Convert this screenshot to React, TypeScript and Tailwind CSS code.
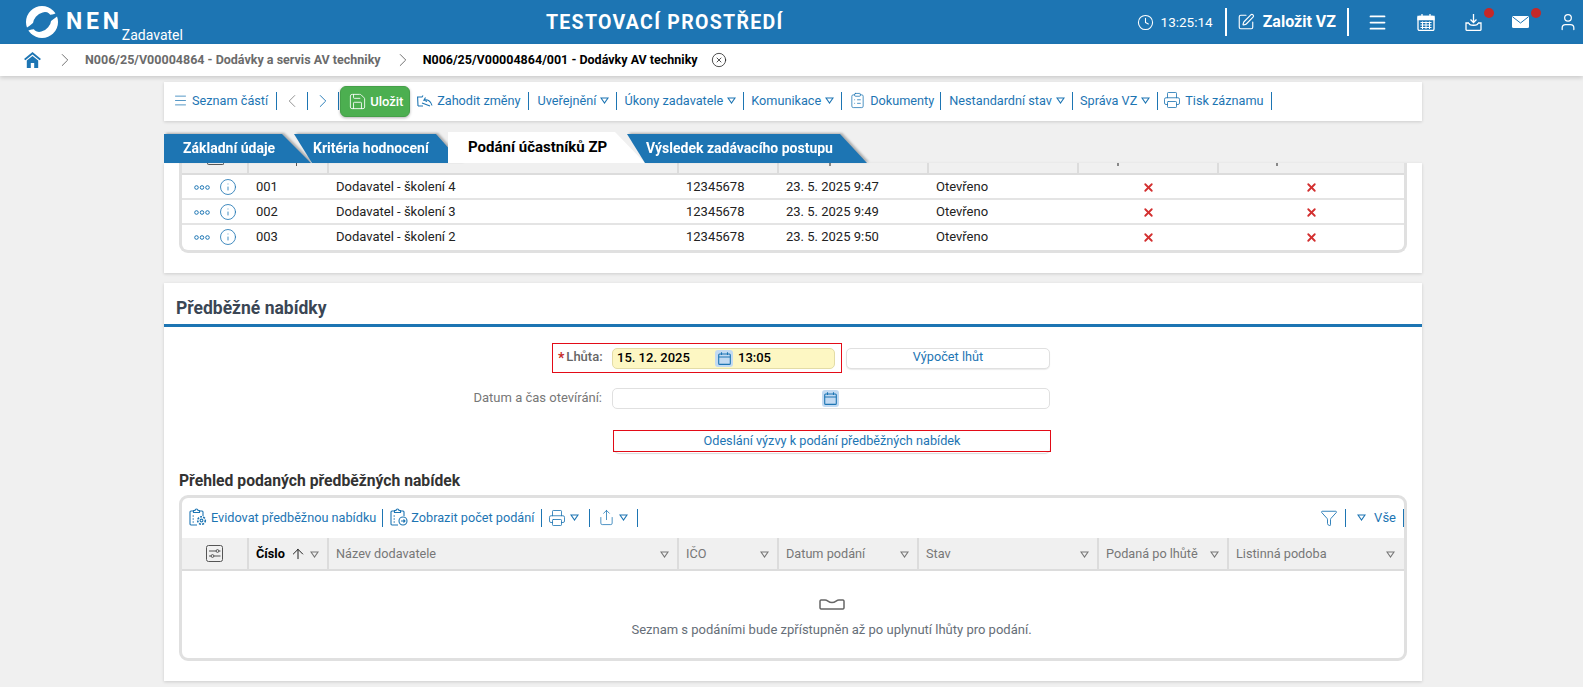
import { ReactNode } from 'react'
import { ArrowUp, ChevronLeft, ChevronRight, CircleX, ClipboardList, Clock, Funnel, Info, Menu, Printer, Save, Share, SquarePen, User, X } from 'lucide-react'

const blue = '#1d75b3'

function Logo() {
  return (
    <svg width="32" height="32" viewBox="0 0 32 32" className="shrink-0">
      <circle cx="16" cy="16" r="16" fill="#fff" />
      <ellipse cx="16" cy="16" rx="8" ry="11" transform="rotate(40 16 16)" fill={blue} />
      <path d="M22.5 8.5 C26 9 29 8 32 6 L33 9 C30 11 27.5 13 25 15 Z" fill={blue} />
      <path d="M9.5 23.5 C6 23 3 24 0 26 L-1 23 C2 21 4.5 19 7 17 Z" fill={blue} />
    </svg>
  )
}

function Caret({ color = blue }: { color?: string }) {
  return (
    <svg width="9" height="7" viewBox="0 0 9 7" className="shrink-0">
      <path d="M1 1 H8 L4.5 6 Z" fill="none" stroke={color} strokeWidth="1.1" />
    </svg>
  )
}

function Sep({ className = '' }: { className?: string }) {
  return <div className={`w-px h-[18px] bg-[#1d75b3] shrink-0 ${className}`} />
}

function HomeIcon() {
  return (
    <svg width="17" height="16" viewBox="0 0 17 16">
      <path d="M8.5 0 L17 7 L15.6 8.2 L8.5 2.4 L1.4 8.2 L0 7 Z" fill={blue} />
      <path d="M2.8 8.6 L8.5 4 L14.2 8.6 V16 H10.2 V11 H6.8 V16 H2.8 Z" fill={blue} />
    </svg>
  )
}

function CalIcon() {
  return (
    <svg width="13" height="13" viewBox="0 0 13 13" fill="none" stroke={blue} strokeWidth="1.1">
      <rect x="0.7" y="2" width="11.6" height="10.4" rx="1" />
      <path d="M0.7 5 H12.3 M3.5 0.3 V3 M9.5 0.3 V3" />
    </svg>
  )
}

function DiscardIcon() {
  return (
    <svg width="16" height="13" viewBox="0 0 16 13" fill="none" stroke={blue} strokeWidth="1.1">
      <path d="M1 12 L0.6 3 H5 L6 1.5 M1 12 H6" />
      <path d="M15 11.5 C14 7 10.5 5 7 6 L8.5 3.5 M7 6 L10 7.5" />
      <path d="M5 9 L13 12" />
    </svg>
  )
}

function ClipGearIcon({ clock }: { clock?: boolean }) {
  return (
    <svg width="18" height="18" viewBox="0 0 18 18" fill="none" stroke={blue} strokeWidth="1.1" className="shrink-0">
      <path d="M8 17 H2 A1 1 0 0 1 1 16 V4 A1 1 0 0 1 2 3 H4.5 M10.5 3 H13 A1 1 0 0 1 14 4 V8" />
      <path d="M4.5 4.5 V2.5 H6 A1.5 1.5 0 0 1 9 2.5 H10.5 V4.5 Z" />
      <path d="M3.5 8 H5 M3.5 11 H5 M3.5 14 H5" />
      {clock ? (
        <>
          <circle cx="13" cy="13" r="4" />
          <path d="M11 13 H15 M13.5 11.5 L15 13 L13.5 14.5" />
        </>
      ) : (
        <>
          <circle cx="12.5" cy="12.5" r="1.4" />
          <circle cx="12.5" cy="12.5" r="3.8" strokeDasharray="2 1.2" strokeWidth="1.6" />
        </>
      )}
    </svg>
  )
}

function ColumnsIcon() {
  return (
    <svg width="17" height="17" viewBox="0 0 17 17" fill="none" stroke="#555" strokeWidth="1">
      <rect x="0.5" y="0.5" width="16" height="16" rx="2" />
      <path d="M3 6 H10 M13 6 H14.5 M3 11 H5 M8 11 H14.5" />
      <circle cx="11.5" cy="6" r="1.4" />
      <circle cx="6.5" cy="11" r="1.4" />
    </svg>
  )
}

function Item({ icon, label, caret }: { icon?: ReactNode; label: string; caret?: boolean }) {
  return (
    <div className="flex items-center shrink-0">
      {icon}
      <span className={`text-[12.7px] text-[#1d75b3] whitespace-nowrap ${icon ? 'ml-[4px]' : ''}`}>{label}</span>
      {caret && <span className="ml-[4px]"><Caret /></span>}
    </div>
  )
}

function Toolbar() {
  return (
    <div className="h-[39px] bg-white shadow-[0_1px_3px_rgba(0,0,0,0.15)] flex items-center pl-[9px] pb-[2px]">
      <Item icon={<Menu size={15} strokeWidth={1.2} color={blue} />} label="Seznam částí" />
      <Sep className="ml-[8px] mr-[4px]" />
      <ChevronLeft size={22} strokeWidth={1} color="#8a8a8a" />
      <Sep className="mx-[4px]" />
      <ChevronRight size={22} strokeWidth={1} color={blue} />
      <Sep className="ml-[4px]" />
      <button className="h-[31px] w-[70px] ml-px mr-[7px] mt-[2px] rounded-md bg-[#4caf50] border border-[#45a049] shadow-[0_1px_3px_rgba(0,0,0,0.3)] flex items-center pl-[7px] text-white text-[13px] font-medium">
        <Save size={19} strokeWidth={1.1} />
        <span className="ml-[3px]">Uložit</span>
      </button>
      <Item icon={<DiscardIcon />} label="Zahodit změny" />
      <Sep className="ml-[7px] mr-[9px]" />
      <Item label="Uveřejnění" caret />
      <Sep className="ml-[7px] mr-[7px]" />
      <Item label="Úkony zadavatele" caret />
      <Sep className="ml-[7px] mr-[7px]" />
      <Item label="Komunikace" caret />
      <Sep className="ml-[7px] mr-[7px]" />
      <span className="-mr-px"><Item icon={<ClipboardList size={17} strokeWidth={1.1} color={blue} />} label="Dokumenty" /></span>
      <Sep className="ml-[7px] mr-[8px]" />
      <Item label="Nestandardní stav" caret />
      <Sep className="ml-[7px] mr-[7px]" />
      <Item label="Správa VZ" caret />
      <Sep className="ml-[7px] mr-[5px]" />
      <Item icon={<Printer size={18} strokeWidth={1.1} color={blue} />} label="Tisk záznamu" />
      <Sep className="ml-[7px]" />
    </div>
  )
}

function Tabs() {
  return (
    <div className="h-[31px] flex items-end font-bold relative">
      <div className="drop-shadow-[2px_-1px_1px_rgba(0,0,0,0.28)]">
        <div className="w-[147px] h-[29px] bg-[#1d75b3] text-white text-[14px] leading-[29px] pl-[19px] [clip-path:polygon(0_0,118px_0,100%_100%,0_100%)]">Základní údaje</div>
      </div>
      <div className="-ml-[17px] drop-shadow-[2px_-1px_1px_rgba(0,0,0,0.28)]">
        <div className="w-[168px] h-[29px] bg-[#1d75b3] text-white text-[14px] leading-[29px] pl-[19px] [clip-path:polygon(0_0,142px_0,100%_100%,18px_100%)]">Kritéria hodnocení</div>
      </div>
      <div className="-ml-[14px] relative w-[197px] h-[31px] bg-white text-black text-[15px] leading-[31px] pl-[20px] [clip-path:polygon(0_0,167px_0,100%_100%,0_100%)]">Podání účastníků ZP</div>
      <div className="-ml-[18px] relative drop-shadow-[2px_-1px_1px_rgba(0,0,0,0.28)]">
        <div className="w-[240px] h-[29px] bg-[#1d75b3] text-white text-[14px] leading-[29px] pl-[19px] [clip-path:polygon(0_0,213px_0,100%_100%,18px_100%)]">Výsledek zadávacího postupu</div>
      </div>
    </div>
  )
}

type Col = { w: string; label: string; sort?: boolean }

const bottomCols: Col[] = [
  { w: 'w-[80px]', label: 'Číslo', sort: true },
  { w: 'w-[350px]', label: 'Název dodavatele' },
  { w: 'w-[100px]', label: 'IČO' },
  { w: 'w-[140px]', label: 'Datum podání' },
  { w: 'w-[180px]', label: 'Stav' },
  { w: 'w-[130px]', label: 'Podaná po lhůtě' },
  { w: 'w-[174px]', label: 'Listinná podoba' },
]

function HeaderRow({ cols }: { cols: Col[] }) {
  return (
    <div className="flex h-[33px] bg-[#f0f0f0] border-b-2 border-b-[#dcdcdc]">
      <div className="w-[67px] shrink-0 flex items-center justify-center border-r-2 border-r-[#dcdcdc]">
        <ColumnsIcon />
      </div>
      {cols.map(c => (
        <div key={c.label} className={`${c.w} shrink-0 flex items-center pl-[7px] pr-[8px] pt-px border-r-2 border-r-[#dcdcdc] last:border-r-0 text-[12.7px] text-[#777] whitespace-nowrap`}>
          <span className={c.sort ? 'font-bold text-black' : ''}>{c.label}</span>
          {c.sort && <ArrowUp size={16} strokeWidth={1.4} color="#111" className="ml-[5px]" />}
          <span className="ml-auto"><Caret color="#777" /></span>
        </div>
      ))}
    </div>
  )
}

// only the bottom of the scrolled-away header shows under the tabs
function ClippedHeader() {
  return (
    <div className="flex h-[12px] bg-[#f0f0f0] border-b-2 border-b-[#dcdcdc]">
      <div className="w-[67px] shrink-0 border-r-2 border-r-[#dcdcdc] pl-[25px]">
        <div className="w-[17px] h-[2px] border border-t-0 border-[#555] rounded-b-[2px]" />
      </div>
      <div className="w-[80px] shrink-0 border-r-2 border-r-[#dcdcdc] pl-[47px]">
        <div className="w-px h-[3px] bg-[#555]" />
      </div>
      <div className="w-[350px] shrink-0 border-r-2 border-r-[#dcdcdc]" />
      <div className="w-[100px] shrink-0 border-r-2 border-r-[#dcdcdc]" />
      <div className="w-[150px] shrink-0 border-r-2 border-r-[#dcdcdc] pl-[50px]">
        <div className="w-[2px] h-[3px] bg-[#888]" />
      </div>
      <div className="w-[150px] shrink-0 border-r-2 border-r-[#dcdcdc]" />
      <div className="w-[140px] shrink-0 border-r-2 border-r-[#dcdcdc] pl-[38px]">
        <div className="w-[2px] h-[3px] bg-[#888]" />
      </div>
      <div className="w-[184px] shrink-0 pl-[57px]">
        <div className="w-[2px] h-[3px] bg-[#888]" />
      </div>
    </div>
  )
}

const rows = [
  { no: '001', name: 'Dodavatel - školení 4', date: '23. 5. 2025 9:47' },
  { no: '002', name: 'Dodavatel - školení 3', date: '23. 5. 2025 9:49' },
  { no: '003', name: 'Dodavatel - školení 2', date: '23. 5. 2025 9:50' },
]

function Dots() {
  return (
    <svg width="16" height="5" viewBox="0 0 16 5" fill="none" stroke={blue} strokeWidth="1">
      <circle cx="2.5" cy="2.5" r="1.8" />
      <circle cx="8" cy="2.5" r="1.8" />
      <circle cx="13.5" cy="2.5" r="1.8" />
    </svg>
  )
}

function TopTable() {
  return (
    <div className="ml-[15px] w-[1228px] border-[3px] border-t-0 border-[#e0e0e0] rounded-b-[9px] overflow-hidden">
      <ClippedHeader />
      {rows.map(r => (
        <div key={r.no} className="flex h-[25px] pt-px items-center border-b-2 border-b-[#e4e4e4] last:border-b-transparent text-[13px] text-[#222]">
          <div className="w-[65px] shrink-0 flex items-center pl-[12px]">
            <Dots />
            <Info size={18} strokeWidth={1.1} color={blue} className="ml-[9px]" />
          </div>
          <div className="w-[80px] shrink-0 pl-[9px]">{r.no}</div>
          <div className="w-[350px] shrink-0 pl-[9px]">{r.name}</div>
          <div className="w-[100px] shrink-0 pl-[9px]">12345678</div>
          <div className="w-[150px] shrink-0 pl-[9px]">{r.date}</div>
          <div className="w-[150px] shrink-0 pl-[9px]">Otevřeno</div>
          <div className="w-[142px] shrink-0 flex justify-center"><X size={13} strokeWidth={3.4} color="#d32f2f" /></div>
          <div className="w-[185px] shrink-0 flex justify-center"><X size={13} strokeWidth={3.4} color="#d32f2f" /></div>
        </div>
      ))}
    </div>
  )
}

function BottomTable() {
  return (
    <div className="ml-[15px] w-[1228px] h-[166px] border-[3px] border-[#e0e0e0] rounded-[9px] overflow-hidden">
      <div className="h-[40px] flex items-center pl-[7px] pb-px">
        <Item icon={<ClipGearIcon />} label="Evidovat předběžnou nabídku" />
        <Sep className="ml-[6px] mr-[7px]" />
        <Item icon={<span className="-mr-px"><ClipGearIcon clock /></span>} label="Zobrazit počet podání" />
        <Sep className="ml-[7px] mr-[6px]" />
        <Printer size={18} strokeWidth={1.1} color={blue} />
        <span className="ml-[4px]"><Caret /></span>
        <Sep className="ml-[10px] mr-[8px]" />
        <Share size={17} strokeWidth={1.1} color={blue} />
        <span className="ml-[4px]"><Caret /></span>
        <Sep className="ml-[9px]" />
        <Funnel size={18} strokeWidth={1.2} color={blue} className="ml-auto" />
        <Sep className="ml-[7px]" />
        <span className="ml-[11px]"><Caret /></span>
        <span className="ml-[8px] text-[13px] text-[#1d75b3]">Vše</span>
        <Sep className="ml-[7px]" />
      </div>
      <HeaderRow cols={bottomCols} />
      <div className="flex flex-col items-center pt-[28px] pl-[77px]">
        <svg width="26" height="11" viewBox="0 0 26 11" fill="none" stroke="#666" strokeWidth="1.5">
          <path d="M2 1 H6 C9 1 9 3.5 13 3.5 C17 3.5 17 1 20 1 H24 A1.3 1.3 0 0 1 25 2.3 V8.7 A1.3 1.3 0 0 1 24 10 H2 A1.3 1.3 0 0 1 1 8.7 V2.3 A1.3 1.3 0 0 1 2 1 Z" />
        </svg>
        <div className="mt-[11px] text-[13px] leading-[18px] text-[#666e78]">Seznam s podáními bude zpřístupněn až po uplynutí lhůty pro podání.</div>
      </div>
    </div>
  )
}

function Form() {
  return (
    <div className="pt-[16px] text-[13px]">
      <div className="flex items-center">
        <div className="ml-[388px] w-[290px] h-[30px] border border-[#e30b17] flex items-center pl-[5px] pr-[6px]">
          <span className="text-[#c62828] text-[14px] font-bold mr-[2px]">*</span>
          <span className="text-[#666] font-medium -mt-[2px]">Lhůta:</span>
          <div className="ml-auto w-[223px] h-[21px] bg-[#fdf7c3] border border-[#e3dca6] rounded-[5px] flex items-center pl-[4px] font-medium text-black">
            <span className="w-[98px]">15. 12. 2025</span>
            <span className="w-[18px] h-[17px] bg-[#c2daf2] rounded-[3px] flex items-center justify-center"><CalIcon /></span>
            <span className="ml-[5px]">13:05</span>
          </div>
        </div>
        <button className="ml-[4px] w-[204px] h-[21px] pb-px bg-white border border-[#e0e0e0] rounded-[5px] shadow-[0_1px_1px_rgba(0,0,0,0.08)] text-[12.7px] text-[#1d75b3] leading-none">Výpočet lhůt</button>
      </div>
      <div className="flex items-center mt-[15px] h-[21px]">
        <div className="w-[438px] text-right text-[#777] -mt-[2px]">Datum a čas otevírání:</div>
        <div className="ml-[10px] w-[438px] h-[21px] bg-white border border-[#e0e0e0] rounded-[5px] flex items-center pl-[209px]">
          <span className="w-[17px] h-[17px] bg-[#c2daf2] rounded-[3px] flex items-center justify-center"><CalIcon /></span>
        </div>
      </div>
      <div className="ml-[449px] mt-[21px] w-[438px] h-[22px] border border-[#e30b17]">
        <button className="w-full h-full pb-[3px] rounded-[5px] shadow-[0_1px_1px_rgba(0,0,0,0.15)] text-[12.7px] text-[#1d75b3] leading-none">Odeslání výzvy k podání předběžných nabídek</button>
      </div>
    </div>
  )
}

export default function App() {
  return (
    <div className="h-screen overflow-hidden bg-[#f0f0f0] font-[Roboto,sans-serif]">
      <header className="h-[44px] bg-[#1d75b3] text-white flex items-start">
        <div className="ml-[26px] mt-[6px]"><Logo /></div>
        <span className="ml-[8px] mt-[11px] text-[23px] leading-[22px] font-bold tracking-[3.8px]">NEN</span>
        <span className="-ml-[1px] mt-[27px] text-[14px] leading-4">Zadavatel</span>
        <span className="ml-[363px] mt-[11px] text-[19.5px] leading-[23px] font-bold tracking-[1.3px] whitespace-nowrap">TESTOVACÍ PROSTŘEDÍ</span>
        <div className="ml-auto h-[44px] flex items-center pr-[5px]">
          <Clock size={17} strokeWidth={1.5} />
          <span className="ml-[7px] text-[13.5px]">13:25:14</span>
          <div className="w-[2px] h-[28px] bg-white ml-[12px]" />
          <SquarePen size={18} strokeWidth={1.5} className="ml-[10px]" />
          <span className="ml-[8px] text-[16px] font-bold">Založit VZ</span>
          <div className="w-[2px] h-[28px] bg-white ml-[11px]" />
          <Menu size={21} strokeWidth={2} className="ml-[18px]" />
          <svg width="18" height="17" viewBox="0 0 18 17" className="ml-[29px]" fill="none" stroke="#fff">
            <rect x="1" y="2.5" width="16" height="14" rx="1.5" strokeWidth="1.3" />
            <path d="M1 5.5 H17 V2.5 H1 Z M5 0 V3 M13 0 V3" fill="#fff" strokeWidth="1.3" />
            <path d="M3.5 8.5 H14.5 M3.5 11 H14.5 M3.5 13.5 H14.5 M5.5 7.5 V15 M9 7.5 V15 M12.5 7.5 V15" strokeWidth="1" />
          </svg>
          <div className="relative ml-[30px]">
            <svg width="17" height="17" viewBox="0 0 17 17" fill="none" stroke="#fff" strokeWidth="1.3" className="block">
              <path d="M8.5 0 V8 M5.5 5.5 L8.5 8.5 L11.5 5.5" />
              <path d="M4 9 H1 V15.5 A1 1 0 0 0 2 16.3 H15 A1 1 0 0 0 16 15.5 V9 H13 M4 9 C4 12 13 12 13 9" />
            </svg>
            <span className="absolute -top-[6px] left-[19px] w-[10px] h-[10px] rounded-full bg-[#c62828]" />
          </div>
          <div className="relative ml-[30px]">
            <svg width="17" height="12" viewBox="0 0 17 12" className="block">
              <rect width="17" height="12" rx="1.5" fill="#fff" />
              <path d="M0.8 1 L8.5 7 L16.2 1" fill="none" stroke={blue} strokeWidth="1" />
            </svg>
            <span className="absolute -top-[8px] left-[19px] w-[10px] h-[10px] rounded-full bg-[#c62828]" />
          </div>
          <User size={20} strokeWidth={1.5} className="ml-[29px]" />
        </div>
      </header>

      <div className="h-[32px] bg-white shadow-[0_2px_4px_rgba(0,0,0,0.15)] flex items-center text-[12.5px] font-bold relative">
        <div className="ml-[24px]"><HomeIcon /></div>
        <ChevronRight size={22} strokeWidth={1} color="#666" className="ml-[13px]" />
        <span className="ml-[9px] text-[#6b6b6b]">N006/25/V00004864 - Dodávky a servis AV techniky</span>
        <ChevronRight size={22} strokeWidth={1} color="#666" className="ml-[11px]" />
        <span className="ml-[9px] text-black">N006/25/V00004864/001 - Dodávky AV techniky</span>
        <CircleX size={16} strokeWidth={1.1} color="#111" className="ml-[13px]" />
      </div>

      <main className="ml-[164px] w-[1258px] pt-[6px]">
        <Toolbar />
        <div className="mt-[11px]"><Tabs /></div>
        <section className="h-[110px] bg-white shadow-[0_1px_3px_rgba(0,0,0,0.15)] overflow-hidden">
          <TopTable />
        </section>
        <section className="mt-[10px] h-[398px] bg-white shadow-[0_1px_3px_rgba(0,0,0,0.15)]">
          <h2 className="h-[44px] pl-[12px] pt-[13px] border-b-[3px] border-b-[#1d75b3] text-[17.5px] leading-[24px] font-bold text-[#3a4654]">Předběžné nabídky</h2>
          <Form />
          <h3 className="mt-[19px] ml-[15px] h-[20px] text-[15.7px] leading-[20px] font-bold text-[#333]">Přehled podaných předběžných nabídek</h3>
          <div className="mt-[4px]"><BottomTable /></div>
        </section>
      </main>
    </div>
  )
}
